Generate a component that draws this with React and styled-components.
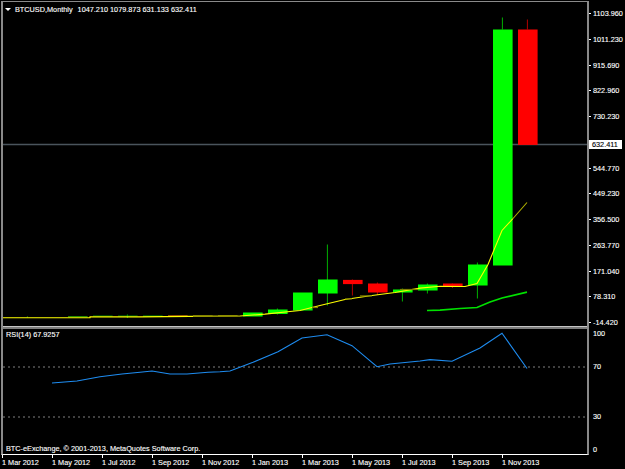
import React from "react";
import styled, { createGlobalStyle } from "styled-components";

const Global = createGlobalStyle`
  html, body { margin: 0; padding: 0; background: #000; }
  #root { width: 625px; height: 469px; overflow: hidden; }
`;

const Terminal = styled.div`
  width: 625px;
  height: 469px;
  background: #000;
  color: #fff;
  font-family: "Liberation Sans", Arial, sans-serif;
  font-size: 7.3px;
  line-height: 9px;
  -webkit-text-stroke: 0.12px #fff;
  padding-top: 1px;
  box-sizing: border-box;
  display: grid;
  grid-template-columns: 589px 36px;
  grid-template-rows: 454px 14px;
`;

const Plots = styled.div`
  margin-left: 1px;
  border-left: 2px solid #8a8a8a;
  border-right: 2px solid #8a8a8a;
  border-top: 1.5px solid #8a8a8a;
  box-sizing: border-box;
  border-bottom: 1px solid #fff;
  display: flex;
  flex-direction: column;
`;

const Pane = styled.div`
  position: relative;
  height: ${(p) => p.$h}px;
  flex: none;
`;

const Divider = styled.div`
  height: 3px;
  flex: none;
  background: linear-gradient(#c4c4c4 0 1.4px, #7c7c7c 1.4px);
`;

const ChartSvg = styled.svg`
  display: block;
  width: 100%;
  height: 100%;
`;

const Legend = styled.div`
  position: absolute;
  left: ${(p) => p.$x}px;
  top: ${(p) => p.$y}px;
  white-space: pre;
  display: flex;
  align-items: center;
`;

const Caret = styled.span`
  width: 0;
  height: 0;
  margin-right: 4px;
  border-left: 3px solid transparent;
  border-right: 3px solid transparent;
  border-top: 3px solid #fff;
`;

const Symbol = styled.span`
  margin-right: 5px;
`;

const Axis = styled.div`
  display: flex;
  flex-direction: column;
`;

const Scale = styled.div`
  display: flex;
  flex-direction: column;
  position: relative;
  flex: none;
  height: ${(p) => p.$h}px;
  padding-top: ${(p) => p.$top}px;
  box-sizing: border-box;
`;

const Tick = styled.div`
  height: ${(p) => p.$h}px;
  flex: none;
  display: flex;
  align-items: flex-start;
  visibility: ${(p) => (p.$blank ? "hidden" : "visible")};
  line-height: 9px;
  &::before {
    content: "";
    width: 2px;
    height: 1px;
    margin: 4px 2px 0 0;
    background: ${(p) => (p.$plain ? "transparent" : "#fff")};
    flex: none;
  }
`;

const PriceBadge = styled.div`
  position: absolute;
  left: 0;
  top: 138.5px;
  width: 33px;
  height: 9px;
  background: #fff;
  color: #000;
  -webkit-text-stroke: 0.12px #000;
  line-height: 9px;
  padding-left: 3px;
  box-sizing: border-box;
`;

const TimeAxis = styled.div`
  grid-column: 1 / 3;
  display: flex;
  padding-left: 2px;
`;

const TimeLabel = styled.div`
  width: 50px;
  flex: none;
  white-space: nowrap;
  position: relative;
  padding-top: 3px;
  &::before {
    content: "";
    position: absolute;
    left: 0;
    top: 0;
    width: 1px;
    height: 3px;
    background: #fff;
  }
`;

const candles = [
  { x: 27, l: 317, h: 318, k: "dim" },
  { x: 77, o: 316.6, c: 317.8, k: "dim" },
  { x: 102, o: 316, c: 317, k: "dark" },
  { x: 127, o: 316, c: 317, l: 315, h: 318.5, k: "dark" },
  { x: 152, o: 316.2, c: 317, k: "up" },
  { x: 177, o: 316, c: 317, k: "orange" },
  { x: 202, o: 315.8, c: 316.8, k: "olive" },
  { x: 227, o: 315.6, c: 316.6, k: "olive" },
  { x: 252, o: 313, c: 317, k: "up" },
  { x: 277, o: 310, c: 314.5, l: 309, h: 315, k: "up" },
  { x: 302, o: 293, c: 311, k: "up" },
  { x: 327, o: 280, c: 294, l: 245, h: 306, k: "up" },
  { x: 352, o: 280.4, c: 284.6, l: 280, h: 296, k: "down" },
  { x: 377, o: 284, c: 293, l: 283, h: 295.5, k: "down" },
  { x: 402, o: 290, c: 293, l: 289, h: 302, k: "up" },
  { x: 427, o: 285, c: 291, l: 284, h: 294, k: "up" },
  { x: 452, o: 284, c: 286.6, l: 284, h: 288.5, k: "down" },
  { x: 477, o: 265, c: 286, l: 263, h: 299, k: "up" },
  { x: 502, o: 30, c: 266, l: 18, h: 30, k: "up" },
  { x: 527, o: 30, c: 145.4, l: 20, h: 30, k: "down" },
];

const bodyColor = { up: "#00ff00", down: "#ff0000", dark: "#008a00", dim: "#2c9c00", orange: "#ff7a00", olive: "#8c8c00" };
const wickColor = { up: "#00b000", down: "#b00000", dark: "#00b000", dim: "#30c000", orange: "#d06000", olive: "#a0a000" };

const yellowLine = "2,318.3 90,318.3 90,317.4 140,317.4 190,316.9 240,316.5 265,314.6 290,312 300,311 320,306 345,300 372,296 395,293 420,288.6 440,286.8 465,287 477,284 488,265 502,231 513,219";
const yellowTail = "513,219 527,203";
const oliveBits = [
  [193, 240, 316.6],
  [312, 318, 308],
  [345, 352, 299.4],
  [360, 372, 296.4],
  [400, 418, 290],
];
const maLine = "427,311 440,310.6 460,309 477,308 490,302.5 502,298.5 527,292.6";
const rsiLine = "52,383 77,381 100,376.7 122,374 140,372.3 152,371 170,374 187,374 208,372.3 220,371.8 230,371 253,362.3 278,351.7 302,338 327,334.7 352,345.7 377,366.7 390,364 420,361 430,359.6 452,361.2 480,348 502,333.3 527,368.5";

const priceTicks = ["1103.960", "1011.230", "915.690", "822.960", "730.230", "", "544.770", "449.230", "356.500", "263.770", "171.040", "78.310", "-14.420"];
const rsiTicks = [["100", 33], ["70", 50], ["30", 33], ["0", 12]];
const months = ["1 Mar 2012", "1 May 2012", "1 Jul 2012", "1 Sep 2012", "1 Nov 2012", "1 Jan 2013", "1 Mar 2013", "1 May 2013", "1 Jul 2013", "1 Sep 2013", "1 Nov 2013"];

function PriceChart() {
  return (
    <ChartSvg viewBox="3 2.5 584 323.5" preserveAspectRatio="none">
      <line x1="0" x2="588" y1="145" y2="145" stroke="#4a545c" strokeWidth="1.4" />
      {candles.map((d) => (
        <g key={d.x}>
          {d.l !== undefined && (
            <line x1={d.x + 0.4} x2={d.x + 0.4} y1={d.l} y2={d.h} stroke={wickColor[d.k]} strokeWidth="1" />
          )}
          {d.o !== undefined && <rect x={d.x - 9} y={d.o} width="19.6" height={d.c - d.o} fill={bodyColor[d.k]} />}
        </g>
      ))}
      <polyline points={maLine} fill="none" stroke="#00e000" strokeWidth="1.7" />
      <polyline points={yellowLine} fill="none" stroke="#ffff00" strokeWidth="1.1" />
      <polyline points={yellowTail} fill="none" stroke="#b4b400" strokeWidth="1.1" />
      {oliveBits.map(([a, b, y]) => (
        <line key={a} x1={a} x2={b} y1={y} y2={y} stroke="#808000" strokeWidth="1.2" />
      ))}
    </ChartSvg>
  );
}

function RsiChart() {
  return (
    <ChartSvg viewBox="3 329 584 125.5" preserveAspectRatio="none">
      <line x1="3" x2="587" y1="367" y2="367" stroke="#808080" strokeWidth="1" strokeDasharray="2 3" />
      <line x1="3" x2="587" y1="417" y2="417" stroke="#808080" strokeWidth="1" strokeDasharray="2 3" />
      <polyline points={rsiLine} fill="none" stroke="#1e8cf0" strokeWidth="1.1" />
    </ChartSvg>
  );
}

export default function App() {
  return (
    <>
      <Global />
      <Terminal>
        <Plots>
          <Pane $h={323.5}>
            <PriceChart />
            <Legend $x={2} $y={3}>
              <Caret />
              <Symbol>BTCUSD,Monthly</Symbol>
              <span>1047.210 1079.873 631.133 632.411</span>
            </Legend>
          </Pane>
          <Divider />
          <Pane $h={125.5}>
            <RsiChart />
            <Legend $x={3} $y={1}>RSI(14) 67.9257</Legend>
            <Legend $x={3} $y={115}>BTC-eExchange, © 2001-2013, MetaQuotes Software Corp.</Legend>
          </Pane>
        </Plots>
        <Axis>
          <Scale $h={327.5} $top={8}>
            {priceTicks.map((t, i) => (
              <Tick key={i} $h={25.75} $blank={!t}>{t}</Tick>
            ))}
            <PriceBadge>632.411</PriceBadge>
          </Scale>
          <Scale $h={126} $top={0}>
            {rsiTicks.map(([t, h]) => (
              <Tick key={t} $h={h} $plain>{t}</Tick>
            ))}
          </Scale>
        </Axis>
        <TimeAxis>
          {months.map((m) => (
            <TimeLabel key={m}>{m}</TimeLabel>
          ))}
        </TimeAxis>
      </Terminal>
    </>
  );
}
